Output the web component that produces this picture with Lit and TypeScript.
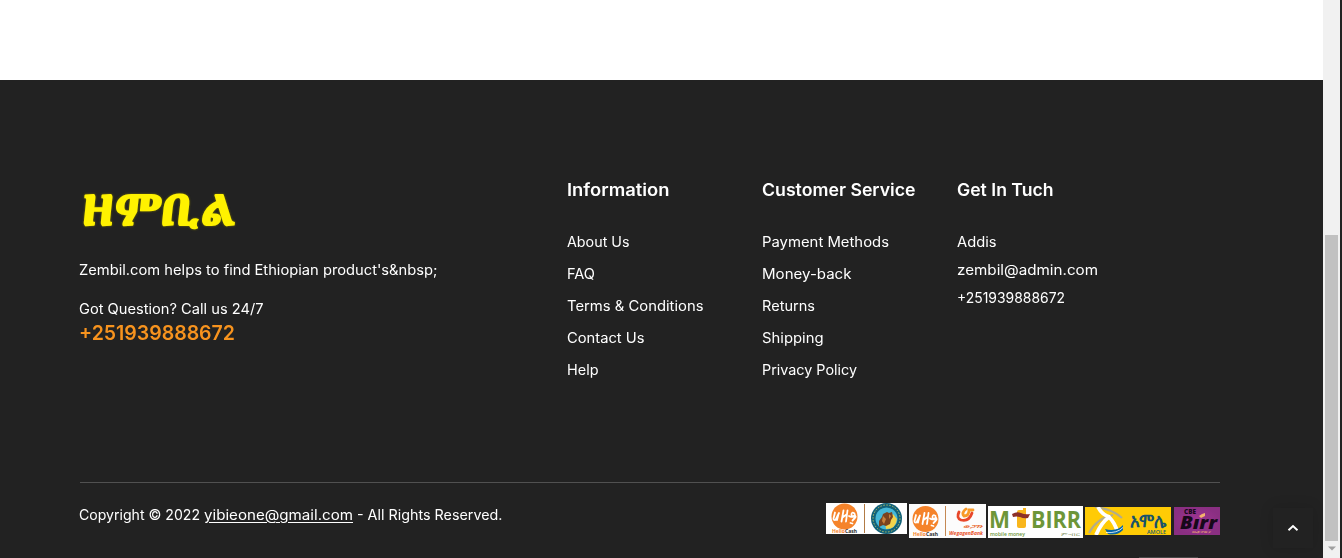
import { LitElement, html, css, svg } from "lit";
import { customElement, property, state } from "lit/decorators.js";

type Line = [label: string, width: number];

const INFORMATION: Line[] = [["About Us", 62.5], ["FAQ", 28], ["Terms & Conditions", 136.5], ["Contact Us", 77.5], ["Help", 31.5]];
const SERVICE: Line[] = [["Payment Methods", 127], ["Money-back", 89.5], ["Returns", 53], ["Shipping", 61.5], ["Privacy Policy", 95]];
const CONTACT: Line[] = [["Addis", 39.5], ["zembil@admin.com", 141], ["+251939888672", 108]];

/** One line of text whose letters are widened to fill the given width. */
@customElement("fitted-text")
export class FittedText extends LitElement {
  @property() text = "";
  @property({ type: Number }) width = 0;
  @state() private stretch = 1;

  static styles = css`
    :host { display: block; white-space: nowrap; }
    .box { display: block; text-decoration: inherit; }
    .text { display: inline-block; transform-origin: 0 50%; text-decoration: inherit; text-underline-offset: inherit; }
  `;

  async firstUpdated() {
    await document.fonts.ready;
    const span = this.renderRoot.querySelector(".text")!;
    this.stretch = this.width / span.getBoundingClientRect().width;
  }

  render() {
    return html`<span class="box" style="width:${this.width}px"><span class="text" style="transform:scaleX(${this.stretch})">${this.text}</span></span>`;
  }
}

const line = ([label, width]: Line) => html`<fitted-text .text=${label} .width=${width}></fitted-text>`;

const helloCash = svg`
  <circle cx="18.500" cy="13.500" r="13" fill="#f5832a"/>
  <g fill="none" stroke="#fff" stroke-width="1.800" stroke-linecap="round" stroke-linejoin="round">
    <path d="M9 9.500l-1.500 6q0 2 2 1.500l3.500-7M12.500 11l-1.500 6"/>
    <path d="M15.500 18.500l2-11M16.500 14.500l4-3M21.500 7.500l-1.500 11"/>
    <path d="M23 13q3 2 6-1M28.500 10.500q-3-2-3 1t3 2-2 4M24.500 20l2 .5"/>
  </g>
  <text x="6" y="30.300" font-size="6" font-weight="700" textLength="25" lengthAdjust="spacingAndGlyphs" fill="#2b2b2b"><tspan fill="#f5832a">Hello</tspan>Cash</text>`;

@customElement("app-root")
export class AppRoot extends LitElement {
  static styles = css`
    :host { display: block; width: 1342px; height: 558px; overflow: hidden; font: 14px/24px Inter, "Open Sans", sans-serif; color: #fff; background: #222; }
    .window { display: flex; height: 558px; position: relative; }
    .page { width: 1323px; }
    .blank { height: 80px; background: #fff; }
    footer { height: 478px; padding: 0 103px 0 79px; box-sizing: border-box; background: #222; }
    .columns { height: 403px; box-sizing: border-box; padding-top: 98px; margin-left: 1px; display: grid; grid-template-columns: 486.600px 195px 195px 1fr; border-bottom: 1px solid #515151; }
    .intro { margin-left: -1px; }
    .logo { display: block; margin-top: 10px; width: 160px; height: 46px; overflow: visible; filter: drop-shadow(0 0 1px #777200); }
    .about { margin-top: 24px; }
    .question { margin-top: 15px; }
    .phone { font-size: 20px; font-weight: 600; line-height: 24px; color: #f7931e; }
    h4 { margin: 0; font-size: 17px; font-weight: 600; line-height: 24px; }
    ul { list-style: none; margin: 28px 0 0; padding: 0; display: grid; gap: 8px; }
    .tight { gap: 4px; }
    .bottom { display: flex; justify-content: space-between; }
    .copyright { padding-top: 20px; display: flex; gap: 4px; }
    .mail fitted-text { text-decoration: underline; text-underline-offset: 2px; }
    .payments { display: flex; gap: 2px; align-items: flex-start; padding-top: 20px; }
    .payments svg { display: block; font-family: "Open Sans", sans-serif; }
    .drop-1 { margin-top: 1px; }
    .drop-3 { margin-top: 3px; }
    .drop-4 { margin-top: 4px; }
    .last { margin-left: 1px; }
    .bar { width: 17px; background: #f1f1f1; display: flex; flex-direction: column; align-items: center; }
    .thumb { margin-top: 235px; width: 13px; height: 306px; background: #c1c1c1; }
    .arrow { margin-top: 5px; }
    .edge { width: 2px; background: #222; }
    .top { position: absolute; left: 1273px; top: 508px; width: 40px; height: 40px; display: grid; place-items: center; background: #222; box-shadow: 0 0 14px rgba(0,0,0,.15); }
    .handle { position: absolute; left: 1139px; top: 557px; width: 59px; height: 1px; background: #484848; }
  `;

  render() {
    return html`
      <div class="window">
        <div class="page">
          <div class="blank"></div>
          <footer>
            <div class="columns">
              <div class="intro">
                <svg class="logo" viewBox="0 0 160 46">
                  <text transform="translate(0.500 36.500) skewX(-6)" x="0" y="0" font-size="42" font-weight="700" font-family="'Noto Serif Ethiopic','Abyssinica SIL','Noto Sans Ethiopic',FreeSerif,serif" fill="#fff200" stroke="#fff200" stroke-width="1.800" stroke-linejoin="round" textLength="155" lengthAdjust="spacingAndGlyphs">ዘምቢል</text>
                </svg>
                <div class="about">${line(["Zembil.com helps to find Ethiopian product's&nbsp;", 358.5])}</div>
                <div class="question">${line(["Got Question? Call us 24/7", 184.5])}</div>
                <div class="phone">${line(["+251939888672", 156])}</div>
              </div>
              <nav><h4>${line(["Information", 102.5])}</h4><ul>${INFORMATION.map((i) => html`<li>${line(i)}</li>`)}</ul></nav>
              <nav><h4>${line(["Customer Service", 153.5])}</h4><ul>${SERVICE.map((i) => html`<li>${line(i)}</li>`)}</ul></nav>
              <nav><h4>${line(["Get In Tuch", 96.5])}</h4><ul class="tight">${CONTACT.map((i) => html`<li>${line(i)}</li>`)}</ul></nav>
            </div>
            <div class="bottom">
              <div class="copyright">
                ${line(["Copyright © 2022", 121])}
                <span class="mail">${line(["yibieone@gmail.com", 149])}</span>
                ${line(["- All Rights Reserved.", 145.5])}
              </div>
              <div class="payments">
                <svg width="81" height="31" viewBox="0 0 81 31">
                  <rect width="81" height="31" fill="#fff"/>${helloCash}
                  <path d="M38.500 1v29" stroke="#b27b45"/>
                  <circle cx="60.500" cy="15.500" r="15.500" fill="#12627a"/>
                  <circle cx="60.500" cy="15.500" r="13.500" fill="none" stroke="#b7bd62" stroke-width="1" stroke-dasharray="1.500 1.500"/>
                  <circle cx="60.500" cy="15.500" r="11" fill="#45b8d8"/>
                  <path d="M60 26q10 0 11-10l-4-5-8 8z" fill="#f2d34b"/>
                  <path d="M53 24l0-6 3-4 1-3 4-2 2 1 3-1 1 5-2 3-1 4-4 2-3-1z" fill="#7a421f"/>
                  <path d="M57 13l3 3-2 5-2-3zM63 11l2 2-2 3z" fill="#c8813c"/>
                </svg>
                <svg class="drop-1" width="77" height="34" viewBox="0 0 77 34">
                  <rect width="77" height="34" fill="#fcfcfc"/>
                  <g transform="translate(-2 1.500)">${helloCash}</g>
                  <path d="M36.500 2v30" stroke="#c58954"/>
                  <g fill="none" stroke-linecap="round" stroke-width="2.800">
                    <path d="M50 8q-3 6 2 8 8 2 11-7" stroke="#e8472a"/>
                    <path d="M57 5q-5 4-2 7 5 0 5-6l4 0" stroke="#f89a28"/>
                  </g>
                  <text x="54" y="24" font-size="5" font-weight="700" font-style="italic" textLength="20" lengthAdjust="spacingAndGlyphs" fill="#e8672b">ወጋገን</text>
                  <text x="40" y="30.500" font-size="5.500" font-weight="700" font-style="italic" textLength="34" lengthAdjust="spacingAndGlyphs" fill="#e8522b">WegagenBank</text>
                </svg>
                <svg class="drop-3" width="95" height="32" viewBox="0 0 95 32">
                  <rect width="95" height="32" fill="#fff"/>
                  <g font-size="23" font-weight="700" fill="#6d9638">
                    <text x="1" y="21.500" textLength="21" lengthAdjust="spacingAndGlyphs">M</text>
                    <text x="43" y="21.500" textLength="50" lengthAdjust="spacingAndGlyphs">BIRR</text>
                  </g>
                  <rect x="29" y="4" width="9" height="18" rx="2" fill="#f9b61c"/>
                  <rect x="35" y="2" width="3" height="4" fill="#f9b61c"/>
                  <path d="M24 8q5-3 9-1 4 2 9 1l-2 4q-4 1-8-1-4-1-7 0z" fill="#8d3027"/>
                  <text x="2" y="29.500" font-size="6" font-weight="600" textLength="35" lengthAdjust="spacingAndGlyphs" fill="#6d9638">mobile money</text>
                  <text x="73" y="29.500" font-size="5" textLength="19" lengthAdjust="spacingAndGlyphs" fill="#7f9362">ም-ብር</text>
                </svg>
                <svg class="drop-4" width="86" height="28" viewBox="0 0 86 28">
                  <rect width="86" height="28" fill="#ffcb05"/>
                  <path d="M10 0q17 2 27 11M28 8q-16 3-24 18" fill="none" stroke="#b3ac8b" stroke-width="2.200"/>
                  <path d="M13 0q4 8 12 10M24 10q-8 6-13 18M24 10q6 6 8 14" fill="none" stroke="#fff" stroke-width="3.800"/>
                  <path d="M20 22q12 3 18-4v5q-6 6-15 4z" fill="#0867a8"/>
                  <path d="M21 25.500q11 1 17-5" fill="none" stroke="#fff" stroke-width=".8"/>
                  <text x="44.500" y="19.500" font-size="19" font-weight="700" textLength="37" lengthAdjust="spacingAndGlyphs" fill="#17536a">አሞሌ</text>
                  <text x="62" y="27" font-size="6" font-weight="600" textLength="19" lengthAdjust="spacingAndGlyphs" fill="#165c70">AMOLE</text>
                </svg>
                <svg class="drop-4 last" width="46" height="28" viewBox="0 0 46 28">
                  <defs><radialGradient id="p"><stop offset="0" stop-color="#9f3594"/><stop offset="1" stop-color="#8a2f82"/></radialGradient></defs>
                  <rect width="46" height="28" fill="url(#p)"/>
                  <text x="10" y="7" font-size="6" font-weight="800" textLength="12" lengthAdjust="spacingAndGlyphs" fill="#18091b">CBE</text>
                  <text x="6" y="21.500" font-size="17" font-weight="800" font-style="italic" textLength="37" lengthAdjust="spacingAndGlyphs" fill="#17081a">Bırr</text>
                  <path d="M25 9l3-2 3-1v3l-4 2z" fill="#f3b36d"/>
                  <text x="18" y="25.500" font-size="3" font-weight="600" textLength="19" lengthAdjust="spacingAndGlyphs" fill="#e6a075">የኢትዮጵያ</text>
                </svg>
              </div>
            </div>
          </footer>
        </div>
        <div class="bar">
          <div class="thumb"></div>
          <svg class="arrow" width="8" height="5" viewBox="0 0 8 5"><path d="M0 .5h8L4 4.500z" fill="#a0a0a0"/></svg>
        </div>
        <div class="edge"></div>
        <div class="top"><svg width="12" height="8" viewBox="0 0 12 8"><path d="M1.500 6.300L6 2l4.500 4.300" fill="none" stroke="#fff" stroke-width="1.900"/></svg></div>
        <div class="handle"></div>
      </div>`;
  }
}
